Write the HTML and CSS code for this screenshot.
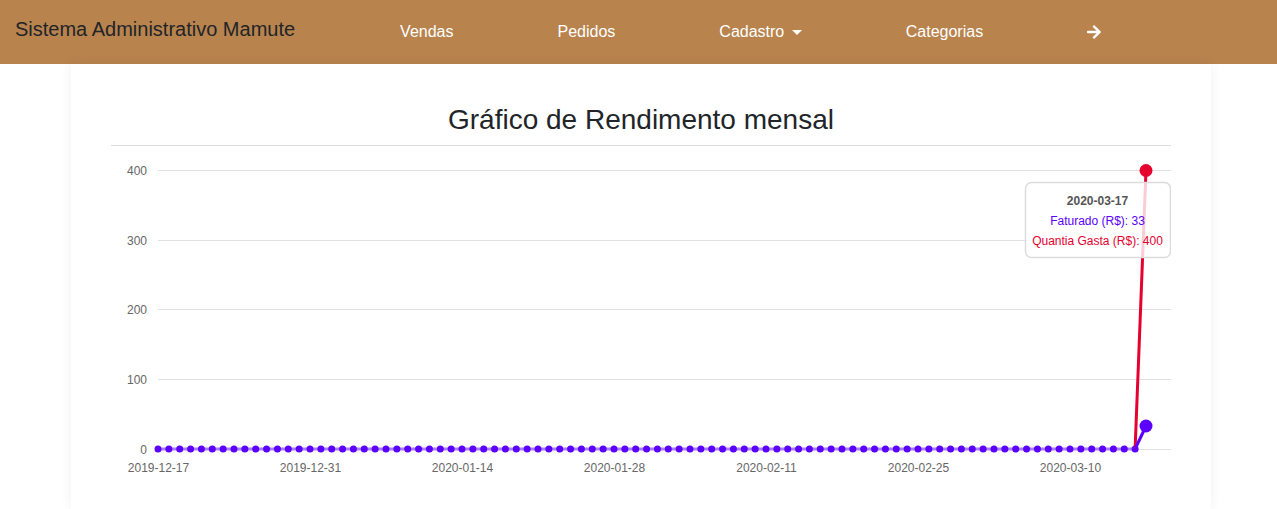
FILE: index.html
```html
<!DOCTYPE html>
<html lang="pt-BR">
<head>
<meta charset="utf-8">
<title>Sistema Administrativo Mamute</title>
<link rel="stylesheet" href="styles.css">
</head>
<body>
<nav class="navbar">
  <span class="brand">Sistema Administrativo Mamute</span>
  <ul class="nav-links">
    <li><a href="#">Vendas</a></li>
    <li><a href="#">Pedidos</a></li>
    <li><a href="#" class="dropdown">Cadastro<span class="caret"></span></a></li>
    <li><a href="#">Categorias</a></li>
    <li><a href="#" class="icon-link"><svg class="arrow" viewBox="0 0 448 512" width="14" height="16"><path fill="#fff" d="M190.5 66.9l22.2-22.2c9.4-9.4 24.6-9.4 33.9 0L441 239c9.4 9.4 9.4 24.6 0 33.9L246.6 467.3c-9.4 9.4-24.6 9.4-33.9 0l-22.2-22.2c-9.5-9.5-9.3-25 .4-34.3L311.4 296H24c-13.3 0-24-10.7-24-24v-32c0-13.3 10.7-24 24-24h287.4L190.9 101.2c-9.8-9.3-10-24.8-.4-34.3z"/></svg></a></li>
  </ul>
</nav>
<main class="card">
  <h1 class="title">Gráfico de Rendimento mensal</h1>
  <hr class="divider">
  <svg class="chart" width="1060" height="340" viewBox="0 0 1060 340">
    <g class="grid" stroke="#e0e0e0" stroke-width="1">
      <line x1="47" y1="24.5" x2="1060" y2="24.5"/>
      <line x1="47" y1="94.5" x2="1060" y2="94.5"/>
      <line x1="47" y1="163.5" x2="1060" y2="163.5"/>
      <line x1="47" y1="233.5" x2="1060" y2="233.5"/>
      <line x1="47" y1="303.5" x2="1060" y2="303.5"/>
    </g>
    <g class="ylabels" text-anchor="end">
      <text x="36" y="28.5">400</text>
      <text x="36" y="98.5">300</text>
      <text x="36" y="167.5">200</text>
      <text x="36" y="237.5">100</text>
      <text x="36" y="307.5">0</text>
    </g>
    <g class="xlabels" text-anchor="middle">
      <text x="47.5" y="326">2019-12-17</text>
      <text x="199.5" y="326">2019-12-31</text>
      <text x="351.5" y="326">2020-01-14</text>
      <text x="503.5" y="326">2020-01-28</text>
      <text x="655.5" y="326">2020-02-11</text>
      <text x="807.5" y="326">2020-02-25</text>
      <text x="959.5" y="326">2020-03-10</text>
    </g>
    <line x1="47" y1="303" x2="1024.1" y2="303" stroke="#a77dff" stroke-width="3"/>
    <line x1="47" y1="303" x2="1024.1" y2="303" stroke="#5b00ff" stroke-width="7" stroke-linecap="round" stroke-dasharray="0 10.857"/>
    <circle cx="1024.1" cy="303" r="3.5" fill="#5b00ff"/>
    <line x1="1024.1" y1="303" x2="1035" y2="24" stroke="#e6002e" stroke-width="3"/>
    <line x1="1024.1" y1="303" x2="1035" y2="280" stroke="#5b00ff" stroke-width="3"/>
    <circle cx="1035" cy="24.5" r="6.5" fill="#e6002e"/>
    <circle cx="1035" cy="280" r="6.5" fill="#5b00ff"/>
    <rect x="914.5" y="36.5" width="145" height="75" rx="6" fill="rgba(255,255,255,0.8)" stroke="#dcdcdc" stroke-width="1.5"/>
    <g class="tip" text-anchor="middle">
      <text x="986.5" y="59" class="tip-title">2020-03-17</text>
      <text x="986.5" y="79" fill="#5b00ff">Faturado (R$): 33</text>
      <text x="986.5" y="99" fill="#e6002e">Quantia Gasta (R$): 400</text>
    </g>
  </svg>
</main>
</body>
</html>
```

FILE: styles.css
```css
* { box-sizing: border-box; }

html, body {
  margin: 0;
  padding: 0;
  background: #ffffff;
  font-family: "Liberation Sans", Arial, sans-serif;
  color: #212529;
  overflow: hidden;
}

.navbar {
  display: flex;
  align-items: flex-start;
  height: 64px;
  background: #b8834d;
}

.brand {
  padding-top: 14px;
  padding-left: 15px;
  font-size: 20px;
  line-height: 30px;
  color: #212529;
  white-space: nowrap;
}

.nav-links {
  display: flex;
  gap: 104px;
  list-style: none;
  margin: 0 0 0 105px;
  padding: 20px 0 0 0;
}

.nav-links a {
  display: flex;
  align-items: center;
  font-size: 16px;
  line-height: 24px;
  color: #ffffff;
  text-decoration: none;
  white-space: nowrap;
}

.caret {
  display: inline-block;
  width: 0;
  height: 0;
  margin-left: 7.5px;
  margin-top: 1px;
  border-top: 5px solid #ffffff;
  border-left: 5px solid transparent;
  border-right: 5px solid transparent;
}

.icon-link {
  height: 24px;
}

.arrow {
  display: block;
  margin-top: -1px;
}

.card {
  display: block;
  width: 1140px;
  height: 445px;
  margin-left: 71px;
  padding: 39px 40px 0 40px;
  background: #ffffff;
  box-shadow: 0 0 12px rgba(0, 0, 0, 0.06);
}

.title {
  margin: 0;
  font-size: 28px;
  font-weight: 400;
  line-height: 34px;
  text-align: center;
  color: #212529;
}

.divider {
  margin: 8px 0 0 0;
  border: 0;
  border-top: 1px solid #dddddd;
}

.chart {
  display: block;
  font-family: "Liberation Sans", Arial, sans-serif;
  font-size: 12px;
}

.ylabels text,
.xlabels text {
  fill: #666666;
}

.tip text {
  font-size: 12px;
}

.tip-title {
  font-weight: 700;
  fill: #555555;
}
```
